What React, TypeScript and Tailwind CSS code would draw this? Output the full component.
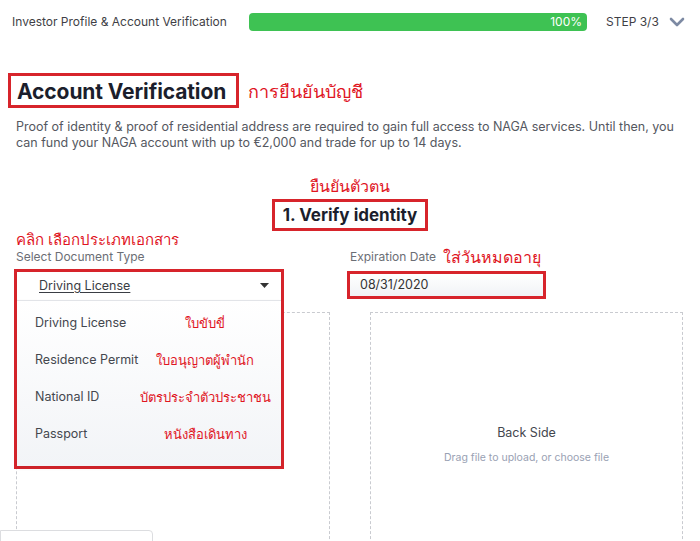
import React from "react";

const RED = "border-[#d7242b]";

export default function App() {
  const items = [
    { en: "Driving License", th: "ใบขับขี่" },
    { en: "Residence Permit", th: "ใบอนุญาตผู้พำนัก" },
    { en: "National ID", th: "บัตรประจำตัวประชาชน" },
    { en: "Passport", th: "หนังสือเดินทาง" },
  ];
  const thai = "font-['Noto_Sans','DejaVu_Sans',sans-serif] text-[#e0151f] whitespace-nowrap";
  return (
    <div className="relative w-[700px] h-[541px] overflow-hidden bg-white font-['Inter','Liberation_Sans',sans-serif] text-[#222]">
      {/* header */}
      <div className="flex items-center h-[44px] pl-3">
        <div className="w-[237px] text-[12px] text-[#3f3f46]">Investor Profile &amp; Account Verification</div>
        <div className="w-[338px] h-[18px] rounded-[4px] bg-[#3ec253] flex items-center justify-end pr-[5px]">
          <span className="text-[12px] text-white leading-none">100%</span>
        </div>
        <div className="ml-[19px] text-[12px] text-[#3f3f46]">STEP 3/3</div>
        <svg className="ml-[10px]" width="16" height="12" viewBox="0 0 16 12">
          <path d="M2 3 L8 9 L14 3" fill="none" stroke="#7d8aa3" strokeWidth="2.6" strokeLinecap="round" strokeLinejoin="round" />
        </svg>
      </div>

      <div className="px-4">
        {/* title */}
        <div className="mt-[29px] flex items-center -ml-2">
          <div className={`h-[35px] w-[231px] border-[3px] ${RED} flex items-center pl-[6px]`}>
            <h1 className="text-[21px] font-bold text-[#1b1e2c] leading-none tracking-[-0.1px] pt-[2px]">Account Verification</h1>
          </div>
          <span className={`ml-[9px] text-[18px] font-medium ${thai} leading-none`}>การยืนยันบัญชี</span>
        </div>

        <p className="mt-[11px] w-[670px] text-[12.5px] leading-[16px] text-[#55585f]">
          Proof of identity &amp; proof of residential address are required to gain full access to NAGA services. Until then, you can fund your NAGA account with up to €2,000 and trade for up to 14 days.
        </p>

        {/* verify identity */}
        <div className="mt-[24px] flex flex-col items-center w-[668px]">
          <div className={`text-[16px] font-medium leading-[22px] ${thai}`}>ยืนยันตัวตน</div>
          <div className={`mt-[2px] h-[32px] w-[156px] border-[3px] ${RED} flex items-center justify-center`}>
            <span className="text-[17px] font-bold text-[#1b1e2c] leading-none">1. Verify identity</span>
          </div>
        </div>

        {/* form row */}
        <div className="flex">
          <div className="w-[331px]">
            <div className={`text-[15px] font-medium leading-[16px] h-[17px] ${thai}`}>คลิก เลือกประเภทเอกสาร</div>
            <div className="text-[12px] leading-[16px] text-[#6b6e75] pt-[1px]">Select Document Type</div>
            <div className="relative mt-[4px] h-[30px]">
              <div className={`absolute left-[-2px] top-0 z-10 w-[270px] border-[3px] ${RED} bg-white`}>
                <div className="h-[28px] flex items-center justify-between pl-[22px] pr-[12px] bg-white shadow-[0_1px_2px_rgba(0,0,0,0.08)]">
                  <span className="text-[12.5px] text-[#3a3d44] underline underline-offset-2">Driving License</span>
                  <svg width="9" height="6" viewBox="0 0 9 6"><path d="M0 0 L9 0 L4.5 5 Z" fill="#333" /></svg>
                </div>
                <div className="border-t border-[#e2e4e8] h-[166px] bg-gradient-to-b from-white to-[#f2f4f7] pt-[4px] shadow-[0_2px_4px_rgba(0,0,0,0.08)]">
                  {items.map((it) => (
                    <div key={it.en} className="h-[37px] flex items-center">
                      <span className="w-[118px] pl-[18px] text-[12.5px] text-[#44474e] whitespace-nowrap">{it.en}</span>
                      <span className={`w-[140px] text-center text-[13px] font-medium ${thai}`}>{it.th}</span>
                    </div>
                  ))}
                </div>
              </div>
            </div>
          </div>
          <div className="w-[199px]">
            <div className="h-[17px]" />
            <div className="h-[17px] flex items-center pl-[3px]">
              <span className="text-[12px] text-[#6b6e75] whitespace-nowrap">Expiration Date</span>
              <span className={`ml-[7px] text-[16px] font-medium ${thai}`}>ใส่วันหมดอายุ</span>
            </div>
            <div className={`mt-[6px] h-[28px] w-[199px] border-[3px] ${RED} bg-gradient-to-b from-white to-[#f1f3f6] flex items-center pl-[10px]`}>
              <span className="text-[12.5px] text-[#333]">08/31/2020</span>
            </div>
          </div>
        </div>

        {/* upload boxes */}
        <div className="mt-[13px] flex gap-[40px]">
          <div className="w-[314px] h-[242px] border border-dashed border-[#c9cbd0]" />
          <div className="w-[313px] h-[242px] border border-dashed border-[#c9cbd0] flex flex-col items-center justify-center pt-[24px]">
            <div className="text-[12.5px] text-[#44474e]">Back Side</div>
            <div className="mt-[7px] text-[10.5px] text-[#99a1b3]">Drag file to upload, or choose file</div>
          </div>
        </div>
      </div>

      {/* bottom-left card */}
      <div className="absolute left-0 top-[530px] w-[153px] h-[30px] bg-white border border-[#dcdde0] rounded-tr-[4px] z-20" />
    </div>
  );
}
